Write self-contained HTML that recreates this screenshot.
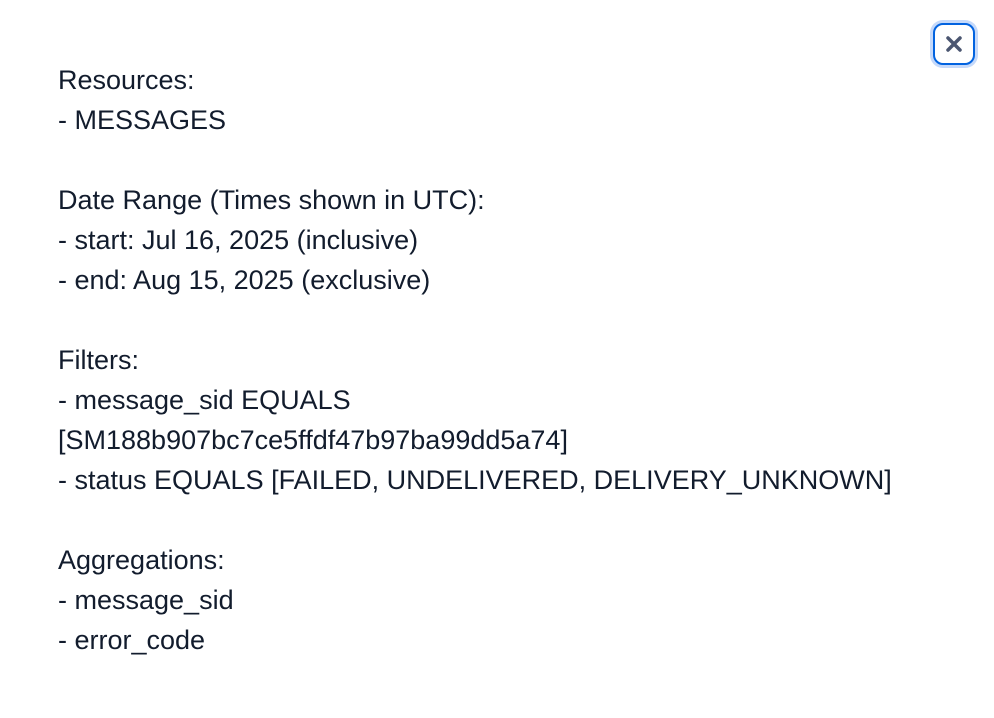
<!DOCTYPE html>
<html><head><style>
body{margin:0;background:#fff;width:994px;height:718px;overflow:hidden;position:relative;font-family:"Liberation Sans",sans-serif;}
.t{position:absolute;left:58px;top:60px;font-size:27px;line-height:40px;color:#121c2d;white-space:pre;letter-spacing:0px;}
.b{position:absolute;left:933px;top:23px;width:38px;height:38px;border:2px solid #0263e0;border-radius:10px;box-shadow:0 0 0 3px #c5d9fa;background:#fff;}
</style></head><body>
<div class="t">Resources:
- MESSAGES

Date Range (Times shown in UTC):
- start: Jul 16, 2025 (inclusive)
- end: Aug 15, 2025 (exclusive)

Filters:
- message_sid EQUALS
[SM188b907bc7ce5ffdf47b97ba99dd5a74]
- status EQUALS [FAILED, UNDELIVERED, DELIVERY_UNKNOWN]

Aggregations:
- message_sid
- error_code</div>
<div class="b"><svg width="38" height="38" viewBox="0 0 38 38"><path d="M13 13L25 25M25 13L13 25" stroke="#4b5671" stroke-width="3.5" stroke-linecap="round"/></svg></div>
</body></html>
